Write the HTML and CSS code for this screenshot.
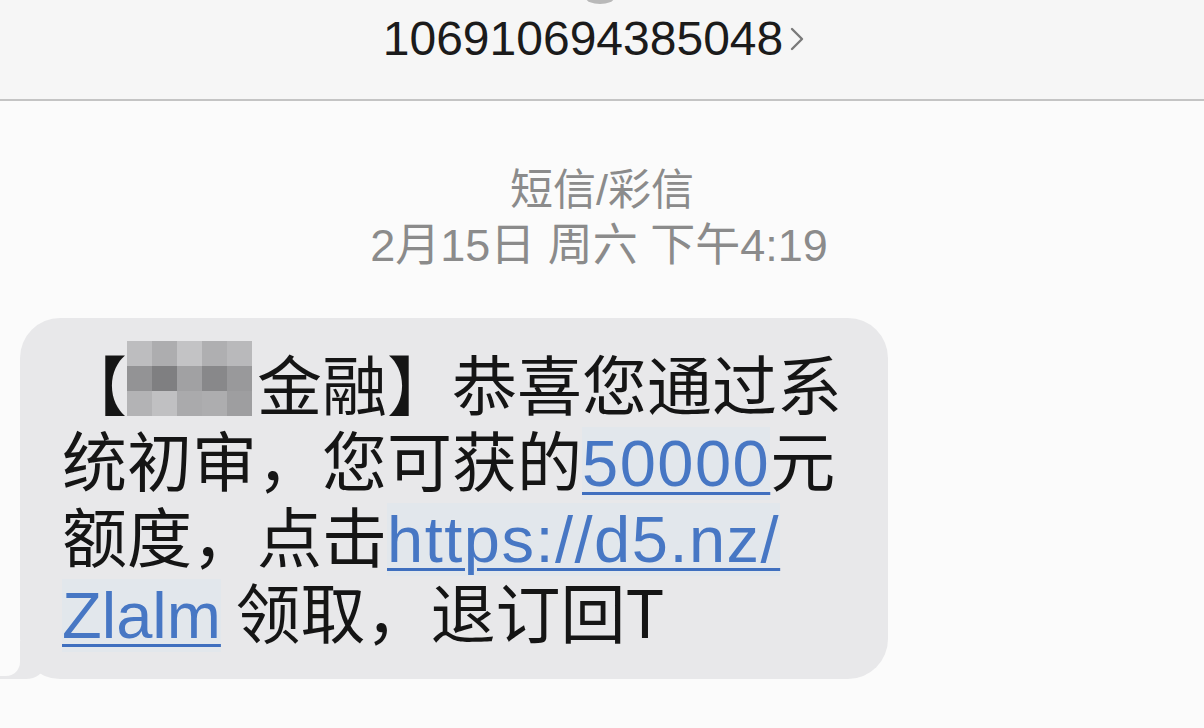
FILE: index.html
```html
<!DOCTYPE html>
<html lang="zh-CN">
<head>
    <meta charset="UTF-8">
    <title>短信</title>
    <link rel="stylesheet" href="styles.css">
</head>
<body>
    <div class="header">
        <div class="avatar"></div>
        <div class="sender">
            <span class="number">106910694385048</span>
            <svg class="chevron" width="20" height="30" viewBox="0 0 20 30">
                <path d="M5 5 L15 15 L5 25" fill="none" stroke="#7a7a7a" stroke-width="2.4" stroke-linecap="round" stroke-linejoin="round"/>
            </svg>
        </div>
    </div>

    <div class="thread">
        <div class="meta">
            <div class="meta-type">短信/彩信</div>
            <div class="meta-time">2月15日 周六 下午4:19</div>
        </div>

        <div class="bubble">
            <p class="message">【<span class="mosaic"><i class="c1"></i><i class="c2"></i><i class="c3"></i><i class="c4"></i><i class="c5"></i><i class="c6"></i><i class="c7"></i><i class="c8"></i><i class="c9"></i><i class="c10"></i><i class="c11"></i><i class="c12"></i><i class="c13"></i><i class="c14"></i><i class="c15"></i></span>金融】恭喜您通过系<br>统初审，您可获的<a href="#">50000</a>元<br>额度，点击<a href="#">https://d5.nz/<br><span class="tail-link">Zlalm</span></a> 领取，退订回T</p>
        </div>
    </div>
</body>
</html>
```

FILE: styles.css
```css
body {
    margin: 0;
    background-color: #fbfbfb;
    font-family: 'Liberation Sans', 'Noto Sans CJK SC', sans-serif;
    color: #141414;
    overflow: hidden;
}
.header {
    position: relative;
    height: 99px;
    background-color: #f6f6f6;
    border-bottom: 2px solid #c4c4c4;
    display: flex;
    justify-content: center;
}
.avatar {
    position: absolute;
    top: -8px;
    left: 586px;
    width: 28px;
    height: 12px;
    border-radius: 50%;
    background-color: #b9b9b9;
}
.sender {
    display: flex;
    align-items: center;
    gap: 4px;
    padding-top: 10px;
    height: 56px;
    padding-right: 14px;
}
.number {
    font-size: 48px;
    color: #1b1b1b;
}
.chevron {
    margin-top: 2px;
}
.thread {
    padding: 0 0 0 20px;
}
.meta {
    text-align: center;
    color: #8b8b8b;
    font-size: 43px;
    line-height: 56px;
    padding-top: 61px;
    padding-right: 20px;
}
.meta-time {
    font-size: 45px;
    padding-right: 6px;
}
.bubble {
    position: relative;
    width: 826px;
    margin-top: 44px;
    padding: 26px 0 31px 42px;
    background-color: #e8e8ea;
    border-radius: 40px;
}
.bubble::before {
    content: '';
    position: absolute;
    left: -20px;
    bottom: 0;
    width: 44px;
    height: 38px;
    background-color: #e8e8ea;
    border-bottom-right-radius: 18px 14px;
}
.bubble::after {
    content: '';
    position: absolute;
    left: -20px;
    bottom: 3px;
    width: 20px;
    height: 38px;
    background-color: #fbfbfb;
    border-bottom-right-radius: 14px;
}
.message {
    position: relative;
    z-index: 1;
    margin: 0;
    font-family: 'Noto Sans CJK SC', sans-serif;
    font-size: 65px;
    line-height: 76px;
    color: #151515;
}
.message a {
    font-family: 'Liberation Sans', 'Noto Sans CJK SC', sans-serif;
    line-height: 1;
    color: #4777c4;
    letter-spacing: 1.5px;
    text-decoration: underline;
    text-decoration-color: #3f6fbf;
    text-decoration-thickness: 3px;
    text-underline-offset: 6px;
    background-color: rgba(205, 228, 245, 0.2);
}
.message .tail-link {
    letter-spacing: 0;
}
.mosaic {
    display: inline-grid;
    grid-template-columns: repeat(5, 25px);
    grid-template-rows: repeat(3, 25px);
    vertical-align: top;
    margin: -3px 5px 0 0;
}
.mosaic i { display: block; }
.c1 { background-color: #bdbdbf; }
.c2 { background-color: #adadaf; }
.c3 { background-color: #c3c3c5; }
.c4 { background-color: #afafb1; }
.c5 { background-color: #b9b9bb; }
.c6 { background-color: #939395; }
.c7 { background-color: #7f7f81; }
.c8 { background-color: #a1a1a3; }
.c9 { background-color: #88888a; }
.c10 { background-color: #99999b; }
.c11 { background-color: #b3b3b5; }
.c12 { background-color: #c0c0c2; }
.c13 { background-color: #aaaaac; }
.c14 { background-color: #adadaf; }
.c15 { background-color: #9e9ea0; }
```
